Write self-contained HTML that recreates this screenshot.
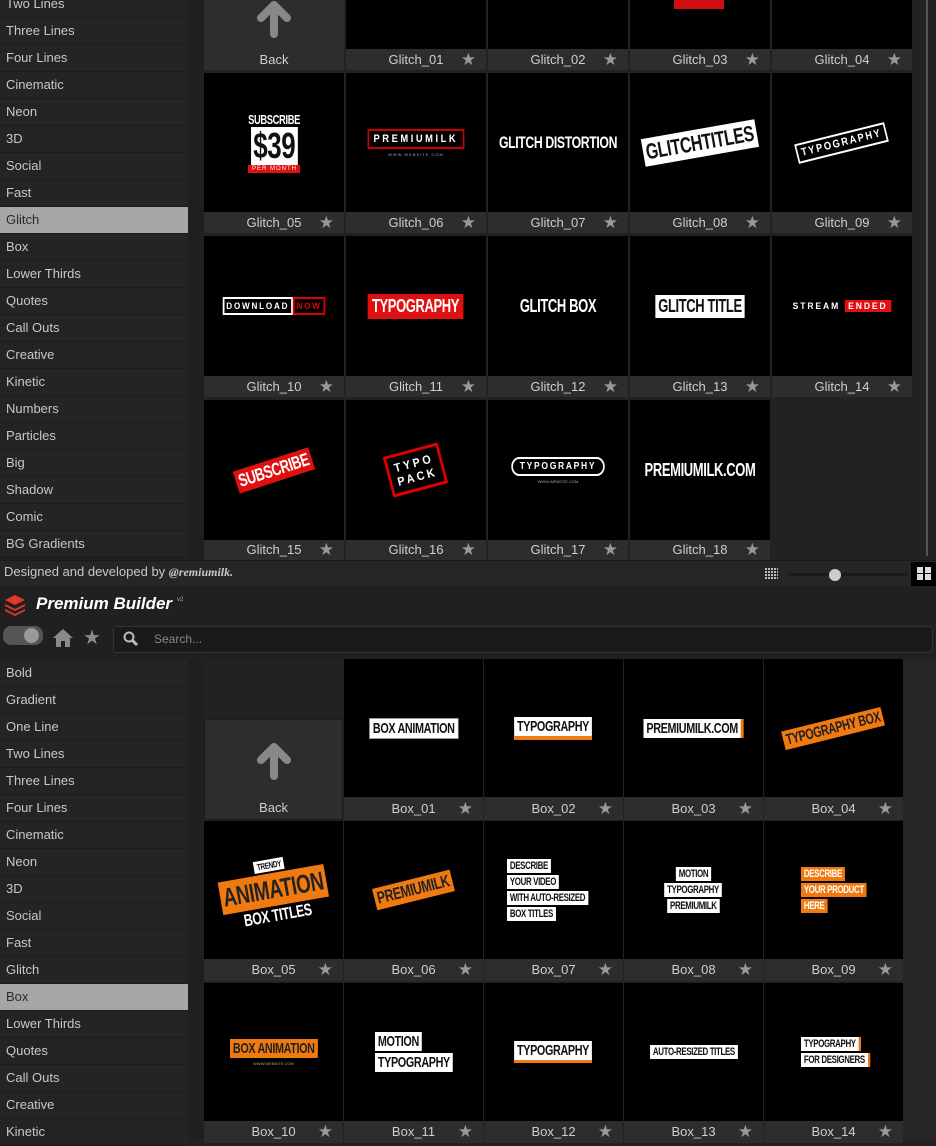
<!DOCTYPE html>
<html><head><meta charset="utf-8"><style>
*{margin:0;padding:0;box-sizing:border-box}
body{width:936px;height:1138px;overflow:hidden;background:#222;font-family:"Liberation Sans",sans-serif;position:relative}
.a{position:absolute}
.sb{position:absolute;left:0;width:188px;background:#1c1c1c}
.it{height:27px;border-bottom:1px solid #1a1a1a;background:#242424;color:#c8c8c8;font-size:13px;line-height:26px;padding-left:6px}
.it.on{background:#a6a6a6;color:#2a2a2a}
.t{position:absolute;background:#2d2d2d}
.im{position:absolute;left:0;top:0;right:0;background:#000;display:flex;align-items:center;justify-content:center;flex-direction:column;overflow:hidden}
.lb{position:absolute;left:0;right:0;bottom:0;color:#cfcfcf;font-size:13px;text-align:center;line-height:21px}
.lb b{position:absolute;right:10px;top:0;color:#999;font-size:17px;font-weight:normal}
.n{font-family:"Liberation Sans",sans-serif;font-weight:bold;color:#fff;letter-spacing:-0.5px;display:inline-block;transform:scaleX(.72);white-space:nowrap;flex:none}
.L .n{transform-origin:left center}
.w{background:#fff;color:#111;padding:1px 4px}
.o{background:#f07a10;color:#222;padding:1px 4px}
.r{background:#e01010;color:#fff;padding:1px 4px}
.bk{position:absolute;left:50%;margin-left:-20px}
</style></head><body>
<div class="a" style="left:188px;top:0;width:15px;height:560px;background:#1f1f1f"></div>
<div class="sb" style="top:-9px">
<div class="it">Two Lines</div><div class="it">Three Lines</div><div class="it">Four Lines</div><div class="it">Cinematic</div><div class="it">Neon</div><div class="it">3D</div><div class="it">Social</div><div class="it">Fast</div><div class="it on">Glitch</div><div class="it">Box</div><div class="it">Lower Thirds</div><div class="it">Quotes</div><div class="it">Call Outs</div><div class="it">Creative</div><div class="it">Kinetic</div><div class="it">Numbers</div><div class="it">Particles</div><div class="it">Big</div><div class="it">Shadow</div><div class="it">Comic</div><div class="it">BG Gradients</div>
</div>
<div class="a" style="left:926px;top:0;width:2px;height:556px;background:#555"></div>
<!-- top row0 -->
<div class="t" style="left:204px;top:-90px;width:140px;height:160px"><svg class="bk" style="top:88px" width="40" height="40" viewBox="0 0 40 40"><path d="M20 36V8M7 20L20 7L33 20" stroke="#888" stroke-width="8" stroke-linecap="round" stroke-linejoin="round" fill="none"/></svg><div class="lb">Back</div></div>
<div class="t" style="left:346px;top:-90px;width:140px;height:160px"><div class="im" style="height:139px"></div><div class="lb">Glitch_01<b>★</b></div></div>
<div class="t" style="left:488px;top:-90px;width:140px;height:160px"><div class="im" style="height:139px"></div><div class="lb">Glitch_02<b>★</b></div></div>
<div class="t" style="left:630px;top:-90px;width:140px;height:160px"><div class="im" style="height:139px"></div><div class="a" style="left:44px;top:88px;width:50px;height:11px;background:#d01010"></div><div class="lb">Glitch_03<b>★</b></div></div>
<div class="t" style="left:772px;top:-90px;width:140px;height:160px"><div class="im" style="height:139px"></div><div class="lb">Glitch_04<b>★</b></div></div>
<!-- row1 -->
<div class="t" style="left:204px;top:73px;width:140px;height:160px"><div class="im" style="height:139px"><div class="n" style="font-size:13px">SUBSCRIBE</div><div class="n w" style="font-size:36px;line-height:38px;padding:0 3px">$39</div><div class="r" style="font-size:6px;width:52px;text-align:center;letter-spacing:1px;white-space:nowrap">PER MONTH</div></div><div class="lb">Glitch_05<b>★</b></div></div>
<div class="t" style="left:346px;top:73px;width:140px;height:160px"><div class="im" style="height:139px"><div class="n" style="font-size:11px;border:2px solid #c00;padding:2px 5px;letter-spacing:3px;transform:scaleX(.85)">PREMIUMILK</div><div style="color:#aaa;font-size:4px;margin-top:3px;letter-spacing:1px">WWW.WEBSITE.COM</div></div><div class="lb">Glitch_06<b>★</b></div></div>
<div class="t" style="left:488px;top:73px;width:140px;height:160px"><div class="im" style="height:139px"><div class="n" style="font-size:17px">GLITCH DISTORTION</div></div><div class="lb">Glitch_07<b>★</b></div></div>
<div class="t" style="left:630px;top:73px;width:140px;height:160px"><div class="im" style="height:139px"><div class="n w" style="font-size:22px;transform:rotate(-10deg) scaleX(.72)">GLITCHTITLES</div></div><div class="lb">Glitch_08<b>★</b></div></div>
<div class="t" style="left:772px;top:73px;width:140px;height:160px"><div class="im" style="height:139px"><div class="n" style="font-size:11px;border:2px solid #fff;padding:2px 4px;letter-spacing:2px;transform:rotate(-14deg) scaleX(.85)">TYPOGRAPHY</div></div><div class="lb">Glitch_09<b>★</b></div></div>
<!-- row2 -->
<div class="t" style="left:204px;top:236px;width:140px;height:161px"><div class="im" style="height:140px"><div style="display:flex;transform:scaleX(.9)"><span class="n" style="font-size:9px;border:2px solid #fff;padding:2px;letter-spacing:2px;transform:none">DOWNLOAD</span><span class="n" style="font-size:9px;border:2px solid #d00;color:#d00;padding:2px;letter-spacing:2px;transform:none">NOW</span></div></div><div class="lb">Glitch_10<b>★</b></div></div>
<div class="t" style="left:346px;top:236px;width:140px;height:161px"><div class="im" style="height:140px"><div class="n r" style="font-size:18px;padding:2px 6px">TYPOGRAPHY</div></div><div class="lb">Glitch_11<b>★</b></div></div>
<div class="t" style="left:488px;top:236px;width:140px;height:161px"><div class="im" style="height:140px"><div class="n" style="font-size:18px">GLITCH BOX</div></div><div class="lb">Glitch_12<b>★</b></div></div>
<div class="t" style="left:630px;top:236px;width:140px;height:161px"><div class="im" style="height:140px"><div class="n w" style="font-size:18px">GLITCH TITLE</div></div><div class="lb">Glitch_13<b>★</b></div></div>
<div class="t" style="left:772px;top:236px;width:140px;height:161px"><div class="im" style="height:140px"><div style="display:flex;align-items:center;transform:scaleX(.95)"><span class="n" style="font-size:9px;letter-spacing:2px;transform:none">STREAM&nbsp;</span><span class="n r" style="font-size:9px;letter-spacing:2px;transform:none">ENDED</span></div></div><div class="lb">Glitch_14<b>★</b></div></div>
<!-- row3 -->
<div class="t" style="left:204px;top:400px;width:140px;height:160px"><div class="im" style="height:140px"><div class="n r" style="font-size:18px;transform:rotate(-18deg) scaleX(.72)">SUBSCRIBE</div></div><div class="lb">Glitch_15<b>★</b></div></div>
<div class="t" style="left:346px;top:400px;width:140px;height:160px"><div class="im" style="height:140px"><div class="n" style="font-size:12px;border:3px solid #d00;padding:4px 6px;letter-spacing:3px;transform:rotate(-15deg) scaleX(.9);line-height:14px;text-align:center">TYPO<br>PACK</div></div><div class="lb">Glitch_16<b>★</b></div></div>
<div class="t" style="left:488px;top:400px;width:140px;height:160px"><div class="im" style="height:140px"><div class="n" style="font-size:10px;border:2px solid #fff;border-radius:10px;padding:2px 8px;letter-spacing:2px;transform:scaleX(.85)">TYPOGRAPHY</div><div style="color:#aaa;font-size:4px;margin-top:3px">WWW.WEBSITE.COM</div></div><div class="lb">Glitch_17<b>★</b></div></div>
<div class="t" style="left:630px;top:400px;width:140px;height:160px"><div class="im" style="height:140px"><div class="n" style="font-size:18px">PREMIUMILK.COM</div></div><div class="lb">Glitch_18<b>★</b></div></div>
<!-- footer bar -->
<div class="a" style="left:0;top:560px;width:936px;height:26px;background:#262626;border-top:1px solid #1a1a1a"></div>
<div class="a" style="left:4px;top:564px;color:#c8c8c8;font-size:13px">Designed and developed by <i style="font-family:'Liberation Serif',serif;font-weight:bold;font-size:12px">@remiumilk.</i></div>
<div class="a" style="left:765px;top:567px;width:13px;height:12px;background:repeating-linear-gradient(90deg,#bbb 0 2px,transparent 2px 3px),#262626;-webkit-mask:repeating-linear-gradient(0deg,#000 0 2px,transparent 2px 3px)"></div>
<div class="a" style="left:788px;top:573px;width:120px;height:3px;background:#1a1a1a;border-radius:2px"></div>
<div class="a" style="left:829px;top:569px;width:12px;height:12px;background:#ccc;border-radius:50%"></div>
<div class="a" style="left:911px;top:562px;width:25px;height:24px;background:#000"></div>
<div class="a" style="left:917px;top:567px;width:6px;height:6px;background:#ddd;box-shadow:8px 0 #ddd,0 7px #ddd,8px 7px #ddd"></div>
<!-- header -->
<div class="a" style="left:0;top:586px;width:936px;height:74px;background:#202020"></div>
<svg class="a" style="left:4px;top:594px" width="22" height="22" viewBox="0 0 22 22"><path d="M11 1L21 6L11 11L1 6Z" fill="#e8352a"/><path d="M1 10L11 15L21 10L21 12L11 17L1 12Z" fill="#e8352a"/><path d="M1 15L11 20L21 15L21 17L11 22L1 17Z" fill="#e8352a"/></svg>
<div class="a" style="left:36px;top:594px;color:#fff;font-size:17px;font-weight:bold;font-style:italic">Premium Builder</div>
<div class="a" style="left:177px;top:597px;color:#aaa;font-size:6px">v2</div>
<div class="a" style="left:3px;top:626px;width:40px;height:19px;background:#555;border-radius:8px"></div>
<div class="a" style="left:24px;top:628px;width:15px;height:15px;background:#999;border-radius:50%"></div>
<svg class="a" style="left:53px;top:629px" width="20" height="18" viewBox="0 0 20 18"><path d="M10 0L20 9H17V18H12V12H8V18H3V9H0Z" fill="#8a8a8a"/></svg>
<div class="a" style="left:83px;top:625px;color:#8a8a8a;font-size:20px">★</div>
<div class="a" style="left:113px;top:626px;width:820px;height:27px;background:#1a1a1a;border:1px solid #333;border-radius:3px"></div>
<svg class="a" style="left:123px;top:631px" width="16" height="16" viewBox="0 0 16 16"><circle cx="6" cy="6" r="4.5" stroke="#bbb" stroke-width="2" fill="none"/><path d="M9 9L14 14" stroke="#bbb" stroke-width="3"/></svg>
<div class="a" style="left:154px;top:632px;color:#888;font-size:12px">Search...</div>
<!-- bottom -->
<div class="a" style="left:188px;top:659px;width:15px;height:479px;background:#1f1f1f"></div>
<div class="a" style="left:903px;top:659px;width:33px;height:479px;background:#262626"></div>
<div class="sb" style="top:660px">
<div class="it">Bold</div><div class="it">Gradient</div><div class="it">One Line</div><div class="it">Two Lines</div><div class="it">Three Lines</div><div class="it">Four Lines</div><div class="it">Cinematic</div><div class="it">Neon</div><div class="it">3D</div><div class="it">Social</div><div class="it">Fast</div><div class="it">Glitch</div><div class="it on">Box</div><div class="it">Lower Thirds</div><div class="it">Quotes</div><div class="it">Call Outs</div><div class="it">Creative</div><div class="it">Kinetic</div>
</div>
<div class="t" style="left:204px;top:719px;width:139px;height:101px;border:1px solid #1c1c1c"><svg class="bk" style="top:20px" width="40" height="40" viewBox="0 0 40 40"><path d="M20 36V8M7 20L20 7L33 20" stroke="#888" stroke-width="8" stroke-linecap="round" stroke-linejoin="round" fill="none"/></svg><div class="lb" style="line-height:23px">Back</div></div>
<div class="t" style="left:344px;top:659px;width:139px;height:161px"><div class="im" style="height:138px"><div class="n w" style="font-size:15px;border:1px solid #999">BOX ANIMATION</div></div><div class="lb" style="line-height:23px">Box_01<b>★</b></div></div>
<div class="t" style="left:484px;top:659px;width:139px;height:161px"><div class="im" style="height:138px"><div class="n w" style="font-size:15px;border-bottom:4px solid #f07a10">TYPOGRAPHY</div></div><div class="lb" style="line-height:23px">Box_02<b>★</b></div></div>
<div class="t" style="left:624px;top:659px;width:139px;height:161px"><div class="im" style="height:138px"><div class="n w" style="font-size:15px;border-right:4px solid #f07a10">PREMIUMILK.COM</div></div><div class="lb" style="line-height:23px">Box_03<b>★</b></div></div>
<div class="t" style="left:764px;top:659px;width:139px;height:161px"><div class="im" style="height:138px"><div class="n o" style="font-size:15px;transform:rotate(-14deg) scaleX(.72)">TYPOGRAPHY BOX</div></div><div class="lb" style="line-height:23px">Box_04<b>★</b></div></div>
<div class="t" style="left:204px;top:821px;width:139px;height:160px"><div class="im" style="height:138px"><div style="transform:rotate(-10deg) scaleX(.72);text-align:center;white-space:nowrap"><div class="n w" style="font-size:9px;transform:none">TRENDY</div><div class="n o" style="font-size:26px;transform:none;display:block">ANIMATION</div><div class="n" style="font-size:17px;transform:none">BOX TITLES</div></div></div><div class="lb" style="line-height:22px">Box_05<b>★</b></div></div>
<div class="t" style="left:344px;top:821px;width:139px;height:160px"><div class="im" style="height:138px"><div class="n o" style="font-size:17px;transform:rotate(-14deg) scaleX(.72)">PREMIUMILK</div></div><div class="lb" style="line-height:22px">Box_06<b>★</b></div></div>
<div class="t L" style="left:484px;top:821px;width:139px;height:160px"><div class="im" style="height:138px;align-items:flex-start;padding-left:22px"><div class="n w" style="font-size:11px;margin:1px">DESCRIBE</div><div class="n w" style="font-size:11px;margin:1px">YOUR VIDEO</div><div class="n w" style="font-size:11px;margin:1px">WITH AUTO-RESIZED</div><div class="n w" style="font-size:11px;margin:1px">BOX TITLES</div></div><div class="lb" style="line-height:22px">Box_07<b>★</b></div></div>
<div class="t" style="left:624px;top:821px;width:139px;height:160px"><div class="im" style="height:138px"><div class="n w" style="font-size:11px;margin:1px">MOTION</div><div class="n w" style="font-size:11px;margin:1px">TYPOGRAPHY</div><div class="n w" style="font-size:11px;margin:1px">PREMIUMILK</div></div><div class="lb" style="line-height:22px">Box_08<b>★</b></div></div>
<div class="t L" style="left:764px;top:821px;width:139px;height:160px"><div class="im" style="height:138px;align-items:flex-start;padding-left:36px"><div class="n o" style="font-size:11px;margin:1px;color:#fff">DESCRIBE</div><div class="n o" style="font-size:11px;margin:1px;color:#fff">YOUR PRODUCT</div><div class="n o" style="font-size:11px;margin:1px;color:#fff">HERE</div></div><div class="lb" style="line-height:22px">Box_09<b>★</b></div></div>
<div class="t" style="left:204px;top:983px;width:139px;height:160px"><div class="im" style="height:138px"><div class="n o" style="font-size:15px">BOX ANIMATION</div><div style="color:#aaa;font-size:4px;margin-top:3px">WWW.WEBSITE.COM</div></div><div class="lb" style="top:138px;bottom:auto;line-height:22px">Box_10<b>★</b></div></div>
<div class="t L" style="left:344px;top:983px;width:139px;height:160px"><div class="im" style="height:138px;align-items:flex-start;padding-left:30px"><div class="n w" style="font-size:15px;margin:1px">MOTION</div><div class="n w" style="font-size:15px;margin:1px">TYPOGRAPHY</div></div><div class="lb" style="top:138px;bottom:auto;line-height:22px">Box_11<b>★</b></div></div>
<div class="t" style="left:484px;top:983px;width:139px;height:160px"><div class="im" style="height:138px"><div class="n w" style="font-size:15px;border-bottom:3px solid #f07a10">TYPOGRAPHY</div></div><div class="lb" style="top:138px;bottom:auto;line-height:22px">Box_12<b>★</b></div></div>
<div class="t" style="left:624px;top:983px;width:139px;height:160px"><div class="im" style="height:138px"><div class="n w" style="font-size:11px">AUTO-RESIZED TITLES</div></div><div class="lb" style="top:138px;bottom:auto;line-height:22px">Box_13<b>★</b></div></div>
<div class="t L" style="left:764px;top:983px;width:139px;height:160px"><div class="im" style="height:138px;align-items:flex-start;padding-left:36px"><div class="n w" style="font-size:11px;margin:1px;border-right:3px solid #f07a10">TYPOGRAPHY</div><div class="n w" style="font-size:11px;margin:1px;border-right:3px solid #f07a10">FOR DESIGNERS</div></div><div class="lb" style="top:138px;bottom:auto;line-height:22px">Box_14<b>★</b></div></div>
</body></html>
